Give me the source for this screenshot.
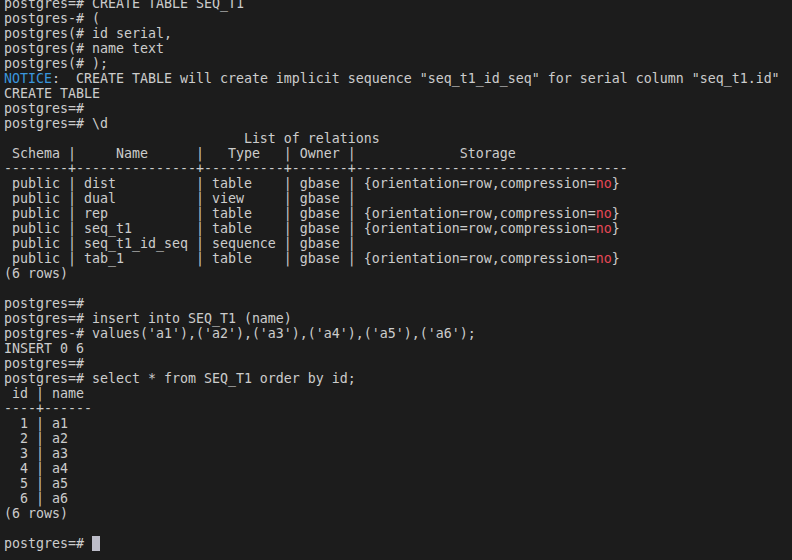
import React from "react";

const C = "text-[#cccccc]";

function Red({ children }: { children: React.ReactNode }) {
  return <span className="text-[#e74856]">{children}</span>;
}

const storage = (
  <>
    {"{orientation=row,compression="}
    <Red>no</Red>
    {"}"}
  </>
);

const lines: React.ReactNode[] = [
  "postgres=# CREATE TABLE SEQ_T1",
  "postgres-# (",
  "postgres(# id serial,",
  "postgres(# name text",
  "postgres(# );",
  <>
    <span className="text-[#3a96dd]">NOTICE</span>
    {':  CREATE TABLE will create implicit sequence "seq_t1_id_seq" for serial column "seq_t1.id"'}
  </>,
  "CREATE TABLE",
  "postgres=#",
  "postgres=# \\d",
  "                              List of relations",
  " Schema |     Name      |   Type   | Owner |             Storage",
  "--------+---------------+----------+-------+----------------------------------",
  <>{" public | dist          | table    | gbase | "}{storage}</>,
  " public | dual          | view     | gbase |",
  <>{" public | rep           | table    | gbase | "}{storage}</>,
  <>{" public | seq_t1        | table    | gbase | "}{storage}</>,
  " public | seq_t1_id_seq | sequence | gbase |",
  <>{" public | tab_1         | table    | gbase | "}{storage}</>,
  "(6 rows)",
  "",
  "postgres=#",
  "postgres=# insert into SEQ_T1 (name)",
  "postgres-# values('a1'),('a2'),('a3'),('a4'),('a5'),('a6');",
  "INSERT 0 6",
  "postgres=#",
  "postgres=# select * from SEQ_T1 order by id;",
  " id | name",
  "----+------",
  "  1 | a1",
  "  2 | a2",
  "  3 | a3",
  "  4 | a4",
  "  5 | a5",
  "  6 | a6",
  "(6 rows)",
  "",
  <>
    {"postgres=# "}
    <span className="inline-block w-[8px] h-[15px] bg-[#bcbcc8] align-top" />
  </>,
];

export default function App() {
  return (
    <div className="w-[792px] h-[560px] overflow-hidden bg-[#1c1c1c]">
      <div
        className={`-mt-[4px] pl-[4px] ${C} whitespace-pre text-[13.29px] leading-[15px]`}
        style={{ fontFamily: '"DejaVu Sans Mono", monospace' }}
      >
        {lines.map((l, i) => (
          <div key={i} className="h-[15px]">
            {l}
          </div>
        ))}
      </div>
    </div>
  );
}
